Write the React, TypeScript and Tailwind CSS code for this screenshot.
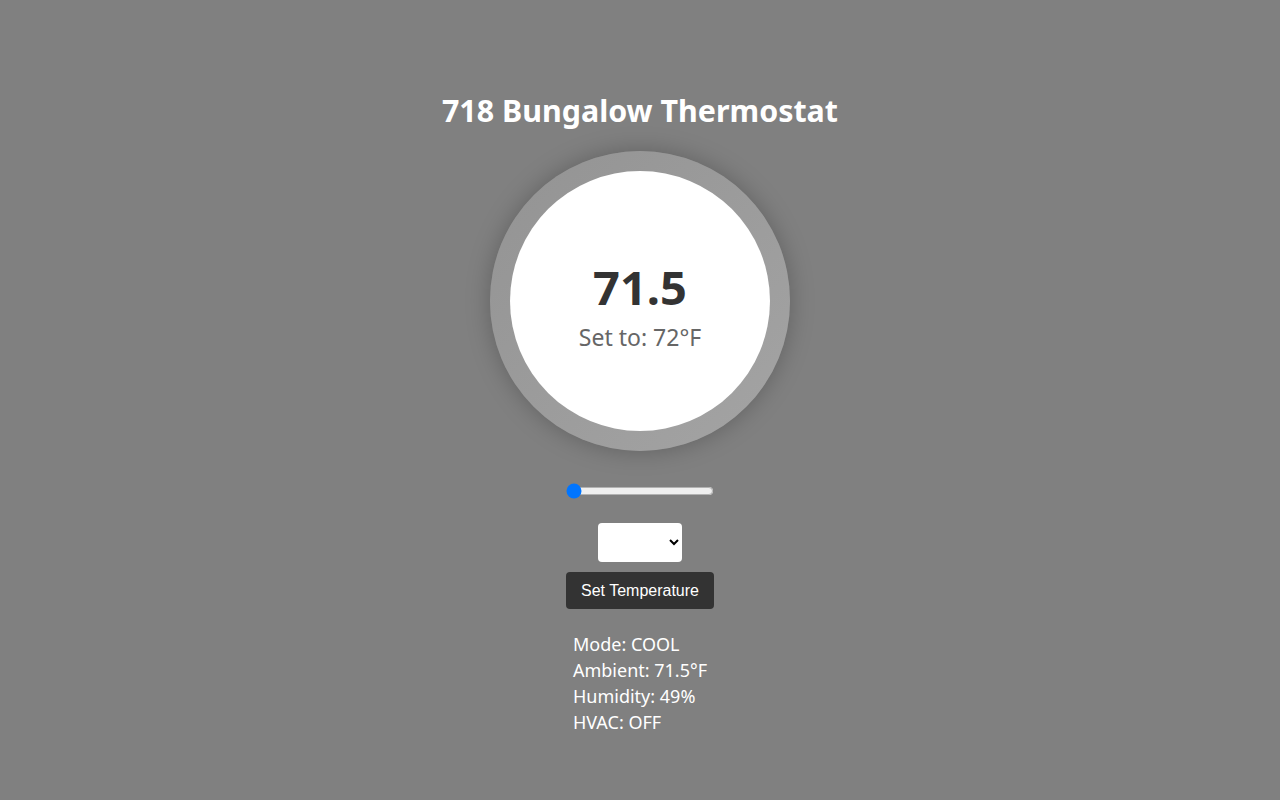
export default function App() {
  return (
    <div
      className="min-h-screen w-full bg-[#808080] flex flex-col items-center text-white"
      style={{ fontFamily: '"Noto Sans", "Open Sans", sans-serif' }}
    >
      <h1 className="mt-[91px] text-[30.4px] leading-[40px] font-bold">718 Bungalow Thermostat</h1>

      <div className="mt-5 h-[300px] w-[300px] rounded-full bg-gradient-to-br from-[#939393] to-[#a4a4a4] p-5 shadow-[0_0_24px_rgba(0,0,0,0.25)]">
        <div className="flex h-full w-full flex-col items-center justify-center rounded-full bg-white">
          <div className="mt-[8px] text-[47px] leading-[56px] font-bold text-[#333]">71.5</div>
          <div className="mt-[7px] text-[23px] leading-[30px] text-[#666]">Set to: 72°F</div>
        </div>
      </div>

      <input
        type="range"
        min={60}
        max={85}
        defaultValue={60}
        className="mt-[32px] w-[148px] accent-[#0075ff]"
      />

      <select className="mt-[24px] h-[39px] w-[84px] rounded bg-white px-2 text-black">
        <option value=""></option>
        <option value="COOL">COOL</option>
        <option value="HEAT">HEAT</option>
      </select>

      <button
        className="mt-[10px] h-[37px] w-[148px] rounded bg-[#333] text-[16px] text-white"
        style={{ fontFamily: '"Liberation Sans", Arial, sans-serif' }}
      >
        Set Temperature
      </button>

      <div className="mt-[22px] text-left text-[18px] leading-[26px]">
        <div>Mode: COOL</div>
        <div>Ambient: 71.5°F</div>
        <div>Humidity: 49%</div>
        <div>HVAC: OFF</div>
      </div>
    </div>
  );
}
